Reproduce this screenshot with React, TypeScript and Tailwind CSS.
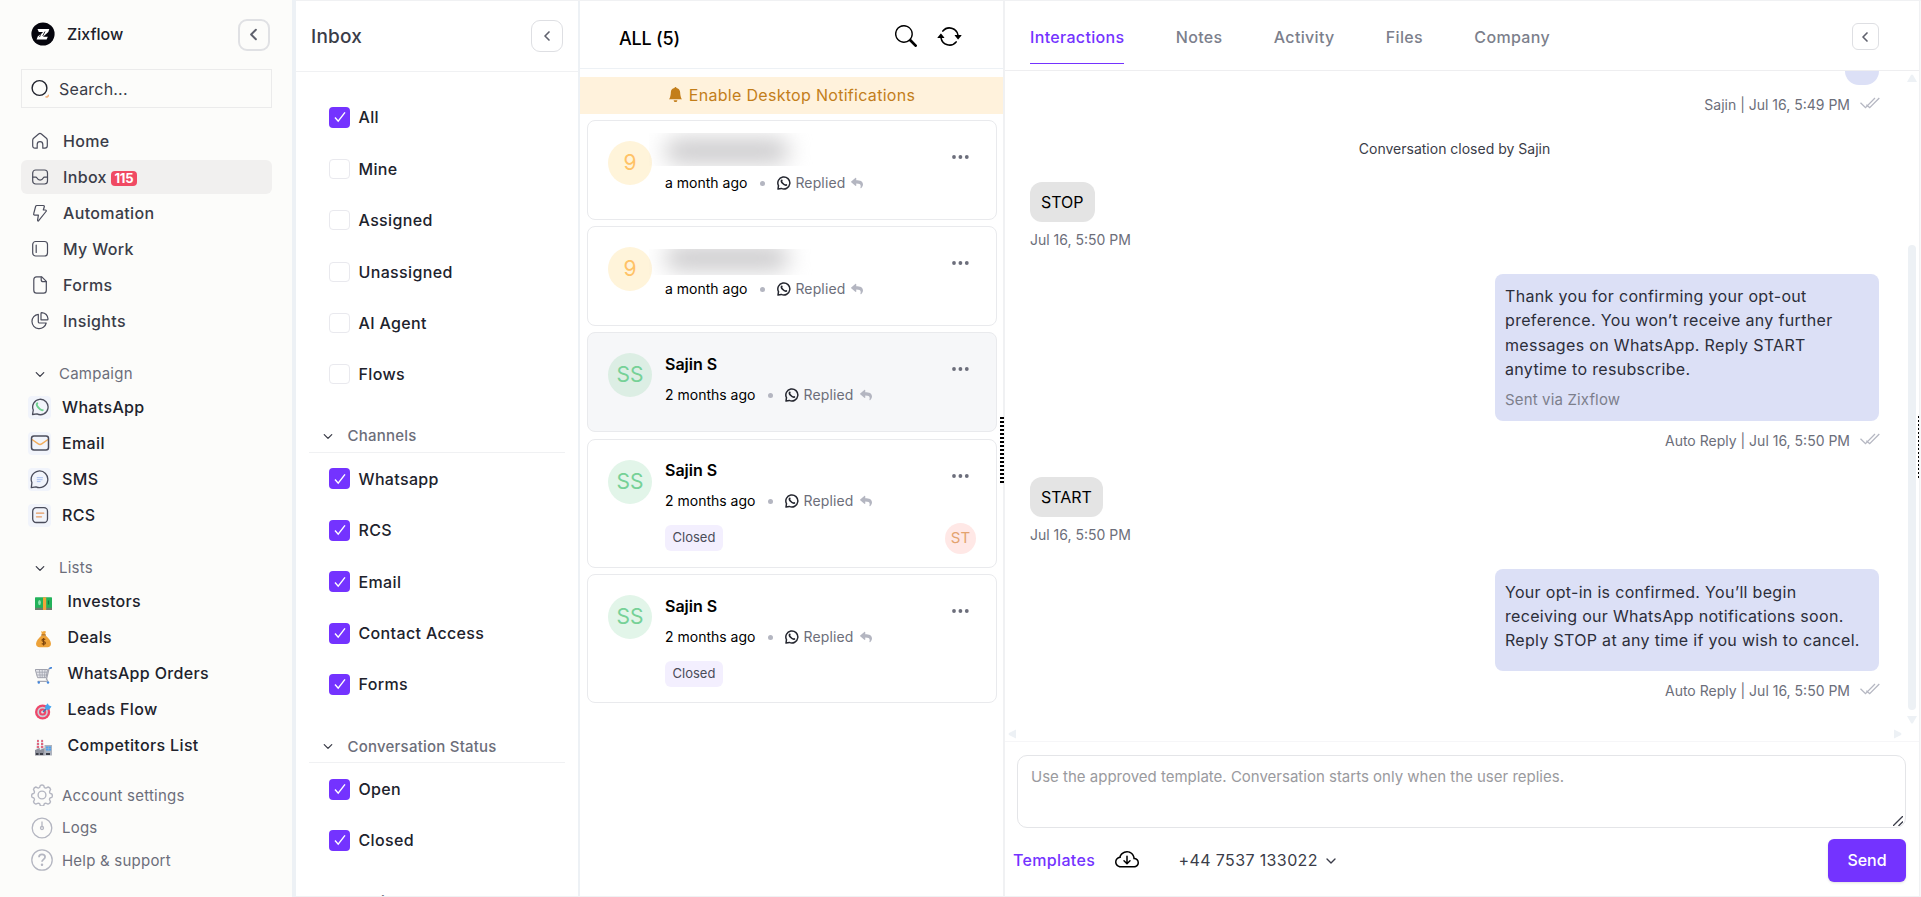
import React from 'react';
import { BsArrowRepeat, BsBellFill, BsCloudArrowDown, BsSearch } from 'react-icons/bs';
import { FaReply } from 'react-icons/fa';
import { ChevronDown, ChevronLeft } from 'lucide-react';

const stroke = {
  fill: 'none',
  stroke: '#4b4d5c',
  strokeWidth: 1.2,
  strokeLinecap: 'round' as const,
  strokeLinejoin: 'round' as const,
};

const HomeIcon = () => (
  <svg width="18" height="18" viewBox="0 0 18 18" {...stroke}>
    <path d="M1.7 8.2c0-.8.3-1.4.9-1.9l5-4.3c.8-.7 2-.7 2.8 0l5 4.3c.6.5.9 1.100.9 1.900v5.600c0 1.500-.9 2.400-2.300 2.400h-2.200v-3.700a2.800 2.800 0 0 0-5.600 0v3.700H4c-1.400 0-2.300-.9-2.300-2.400z" />
  </svg>
);

const InboxIcon = () => (
  <svg width="18" height="18" viewBox="0 0 18 18" {...stroke}>
    <rect x="1.700" y="2" width="14.800" height="14" rx="3" />
    <path d="M1.700 9.200h3c.6 0 1 .3 1.300.8.600 1.300 1.700 2.100 3.100 2.100s2.500-.8 3.100-2.100c.3-.5.700-.8 1.300-.8h3" />
  </svg>
);

const AutomationIcon = () => (
  <svg width="18" height="18" viewBox="0 0 18 18" {...stroke}>
    <path d="M5.800 1.500h6.500c.8 0 1.200.6 1 1.300l-1 3.200h2c1 0 1.300.8.7 1.500l-7.300 9.200c-.5.600-1.200.3-1.100-.5l.8-5.100H3.700c-.8 0-1.300-.6-1-1.400L4.600 2.500c.2-.6.600-1 1.200-1z" />
  </svg>
);

const MyWorkIcon = () => (
  <svg width="18" height="18" viewBox="0 0 18 18" {...stroke}>
    <rect x="1.700" y="1.500" width="14.800" height="14.500" rx="3" />
    <path d="M5.200 5v7.500" />
  </svg>
);

const FormsIcon = () => (
  <svg width="18" height="18" viewBox="0 0 18 18" {...stroke}>
    <path d="M5.500.8h5.300l4.500 4.500v9c0 1.700-1 2.900-2.700 2.900H5.500c-1.700 0-2.700-1.200-2.700-2.900V3.700C2.800 2 3.800.8 5.500.8z" />
    <path d="M10.200 1v2.700c0 1.200.7 2 2 2h3" />
  </svg>
);

const InsightsIcon = () => (
  <svg width="18" height="18" viewBox="0 0 18 18" {...stroke}>
    <path d="M7.300 2.300A7.200 7.200 0 1 0 15.200 11H8.500c-.7 0-1.200-.5-1.200-1.200z" />
    <path d="M10 1.400c0-.5.400-.8.800-.8a7 7 0 0 1 6.200 6.300c0 .5-.3.900-.8.900H10z" />
  </svg>
);

const WhatsAppColorIcon = () => (
  <svg width="18" height="18" viewBox="0 0 18 18" {...stroke} strokeWidth={1.3}>
    <path d="M1.500 16.500l.8-4.500A7.700 7.700 0 1 1 6 15.900z" />
    <path d="M6.300 5.300c-.9.700-.6 2.200.7 3.900s3.300 3.300 4.800 2.900" stroke="#6fd08f" strokeWidth="1.900" />
  </svg>
);

const EmailIcon = () => (
  <svg width="20" height="18" viewBox="0 0 20 18" {...stroke} strokeWidth={1.500}>
    <path d="M2 5.500l6.300 4.300c1 .7 2.400.7 3.400 0L18 5.500" stroke="#f2ad5c" />
    <rect x="1.500" y="2" width="17" height="14" rx="2.500" />
  </svg>
);

const SmsIcon = () => (
  <svg width="19" height="19" viewBox="0 0 19 19" {...stroke} strokeWidth={1.300}>
    <path d="M1.300 17.600l.6-5A8.300 8.300 0 1 1 6 16.800z" />
    <path d="M7.200 7.700h5.300M7.200 9.700h5M7.200 11.600h3" stroke="#a9c0f0" strokeWidth="1" />
  </svg>
);

const RcsIcon = () => (
  <svg width="18" height="18" viewBox="0 0 18 18" {...stroke} strokeWidth={1.300}>
    <rect x="1.700" y="1.700" width="14.800" height="14.800" rx="3.500" />
    <path d="M5.500 7.200h7.200M5.500 10.800h5" stroke="#e59a62" />
  </svg>
);

const MoneyEmoji = () => (
  <svg width="17" height="17" viewBox="0 0 17 17">
    <rect x="0" y="12" width="17" height="3" fill="#6c7a6c" />
    <rect x="0" y="2.300" width="17" height="10.500" rx=".6" fill="#22b25a" />
    <rect x="8" y="2.300" width="3.200" height="12.700" fill="#f2a53a" />
    <ellipse cx="4.500" cy="7.600" rx="1.400" ry="2.600" fill="#8fe0ae" />
    <path d="M13.500 5.500v4" stroke="#13753a" strokeWidth="1.200" />
  </svg>
);

const MoneyBagEmoji = () => (
  <svg width="17" height="17" viewBox="0 0 17 17">
    <path d="M6.200 0l1.300.8L9 0l2 .6-1.200 3.400H7z" fill="#f0a63a" />
    <path d="M6.500 4.500h4.200C13.500 7 16 10 16 12.800c0 2.300-1.500 3.400-3.500 3.400h-8C2.500 16.200 1 15.100 1 12.800 1 10 3.800 7 6.500 4.500z" fill="#eda239" />
    <path d="M6.300 4h4.600" stroke="#a86414" strokeWidth="1.200" />
    <path d="M10.300 8.500c-.9-.8-3.300-.7-3.300.8 0 1.700 3.400.9 3.400 2.600 0 1.500-2.500 1.600-3.600.6M8.600 7v7.600" fill="none" stroke="#7a430c" strokeWidth="1.100" />
  </svg>
);

const CartEmoji = () => (
  <svg width="17" height="17" viewBox="0 0 17 17" fill="none" strokeLinecap="round">
    <path d="M.6 2.500h12l-1.600 8.200H3z" fill="#e4e5ea" stroke="#a0a2ad" />
    <path d="M1.500 5.200h10.600M2 8h9.500M4.500 3l.7 7.500M7.200 3v7.500M10 3l-.6 7.500" stroke="#a0a2ad" strokeWidth=".8" />
    <path d="M16 .9l-2 .8-2.500 10.500c1.800 1.300 1.300 2.200-.5 2.200H3" stroke="#a6a8b3" strokeWidth="1.300" />
    <path d="M15 1.300l1.400-.6" stroke="#4386dc" strokeWidth="1.600" />
    <circle cx="3.800" cy="15.500" r="1.200" fill="#4386dc" />
    <circle cx="13" cy="15.500" r="1.200" fill="#4386dc" />
  </svg>
);

const TargetEmoji = () => (
  <svg width="17" height="17" viewBox="0 0 17 17">
    <circle cx="7.600" cy="9" r="7.600" fill="#ee4769" />
    <circle cx="7.600" cy="9" r="5.300" fill="#c9ced8" />
    <circle cx="7.600" cy="9" r="3.600" fill="#ee4769" />
    <circle cx="7.600" cy="9" r="1.500" fill="#dfe2e8" />
    <path d="M8 9l4.500-4.500" stroke="#3579b8" strokeWidth="1.300" />
    <path d="M10 3.300L12.800.2l.9 2 2.800 1.200-2.400 3.400-3.200-.3z" fill="#46a4ee" />
  </svg>
);

const FactoryEmoji = () => (
  <svg width="17" height="17" viewBox="0 0 17 17">
    <path d="M2 .5h1.800l.5 10H1.600zM6.200.5H8l.5 10H5.700z" fill="#d9d9df" />
    <path d="M2 2h1.900M1.900 5h2.200M1.800 8h2.300M6.200 2h1.900M6 5h2.200M5.900 8h2.400" stroke="#e4405f" strokeWidth="1.500" />
    <rect x="9.500" y="6" width="7.500" height="10.500" fill="#aeb3be" />
    <path d="M0 11l4.800-2v2l4.800-2v7.500H0z" fill="#8d909b" />
    <path d="M11 7.500h5v4h-5z" fill="#4fa3ef" />
    <path d="M13.500 7.500v4M11 9.500h5" stroke="#aeb3be" strokeWidth=".5" />
    <path d="M1 15h2.500M5 15h3M11 15h4" stroke="#3b3d46" strokeWidth="1.800" />
  </svg>
);

const GearIcon = () => (
  <svg width="22" height="22" viewBox="0 0 22 22" fill="none" stroke="#b4b6c1" strokeWidth="1.400" strokeLinejoin="round">
    <path d="M9.300 1.500q1.700-1.100 3.400 0l.6 1.900q1 .9 2.200.4l1.700-.8q1.900.5 2.400 2.400l-.9 1.900q-.4 1.200.5 2.100l1.600.6q1.100 1.600 0 3.300l-1.700.6q-.9.900-.4 2.100l.8 1.800q-.5 1.800-2.400 2.300l-1.800-.8q-1.200-.4-2 .5l-.6 1.700q-1.700 1.100-3.400 0l-.6-1.700q-.9-.9-2.100-.5l-1.800.8q-1.800-.5-2.300-2.300l.8-1.800q.4-1.200-.5-2.100l-1.600-.6q-1.100-1.700 0-3.300l1.700-.6q.8-.9.4-2.100l-.8-1.900q.5-1.900 2.300-2.400l1.900.8q1.200.5 2-.4z" />
    <circle cx="11" cy="11" r="3.900" />
  </svg>
);

const LogsIcon = () => (
  <svg width="22" height="22" viewBox="0 0 22 22" fill="none" stroke="#b4b6c1" strokeWidth="1.300">
    <circle cx="11" cy="11" r="9.800" />
    <circle cx="11" cy="11" r="1.500" />
    <path d="M11 4.500v5" />
  </svg>
);

const HelpIcon = () => (
  <svg width="22" height="22" viewBox="0 0 22 22" fill="none" stroke="#b4b6c1" strokeWidth="1.300">
    <circle cx="11" cy="11" r="10.200" />
    <path d="M8 8.300c0-1.800 1.200-2.900 3-2.900s3.100 1.100 3.100 2.700c0 2.300-3.100 2.300-3.100 4.700" strokeWidth="1.700" />
    <circle cx="11" cy="15.800" r=".6" fill="#b4b6c1" />
  </svg>
);

const WhatsAppIcon = () => (
  <svg width="14" height="14" viewBox="0 0 14 14" fill="none" stroke="#24262f" strokeLinejoin="round">
    <path d="M1 13l.5-3.300A6 6 0 1 1 4.300 12.400z" strokeWidth="1.500" />
    <path d="M4.800 4.300c-.6.600-.3 1.800.8 3s2.500 2.200 3.800 1.700" strokeWidth="1.700" strokeLinecap="round" />
  </svg>
);

const DoubleTick = () => (
  <svg width="20" height="12" viewBox="0 0 20 12" fill="none" stroke="#b5b7c2" strokeWidth="1.300">
    <path d="M.5 5.700l5 5L15 1M6.300 7.700l3.400 3L19.300 1" />
  </svg>
);

const MoreDots = () => (
  <svg width="18" height="4" viewBox="0 0 18 4" fill="#6c6e7b">
    <circle cx="2" cy="2" r="1.900" />
    <circle cx="8.400" cy="2" r="1.900" />
    <circle cx="14.800" cy="2" r="1.900" />
  </svg>
);

const Logo = () => (
  <svg width="24" height="24" viewBox="0 0 24 24">
    <circle cx="12" cy="12" r="11.600" fill="#05050d" />
    <path d="M6.500 7h11.800l-1 3-5.300 4.700h4.800l-1.200 2.900H5.600l1.100-3L12.200 9.900H7.800z" fill="#fff" />
    <path d="M10.500 10.500l-2 4.500M14 9.500l-2.300 4.500" stroke="#05050d" strokeWidth=".8" />
  </svg>
);

const navItems = [
  { label: 'Home', icon: <HomeIcon /> },
  { label: 'Inbox', icon: <InboxIcon />, count: 115 },
  { label: 'Automation', icon: <AutomationIcon /> },
  { label: 'My Work', icon: <MyWorkIcon /> },
  { label: 'Forms', icon: <FormsIcon /> },
  { label: 'Insights', icon: <InsightsIcon /> },
];

const campaignItems = [
  { label: 'WhatsApp', icon: <WhatsAppColorIcon /> },
  { label: 'Email', icon: <EmailIcon /> },
  { label: 'SMS', icon: <SmsIcon /> },
  { label: 'RCS', icon: <RcsIcon /> },
];

const listItems = [
  { label: 'Investors', icon: <MoneyEmoji /> },
  { label: 'Deals', icon: <MoneyBagEmoji /> },
  { label: 'WhatsApp Orders', icon: <CartEmoji /> },
  { label: 'Leads Flow', icon: <TargetEmoji /> },
  { label: 'Competitors List', icon: <FactoryEmoji /> },
];

const footerItems = [
  { label: 'Account settings', icon: <GearIcon /> },
  { label: 'Logs', icon: <LogsIcon /> },
  { label: 'Help & support', icon: <HelpIcon /> },
];

const filterGroups = [
  {
    title: 'Channels',
    items: ['Whatsapp', 'RCS', 'Email', 'Contact Access', 'Forms'],
  },
  {
    title: 'Conversation Status',
    items: ['Open', 'Closed'],
  },
];

interface Conversation {
  initials: string;
  name?: string;
  tightMask?: boolean;
  time: string;
  closed?: boolean;
  assignee?: string;
  active?: boolean;
}

// Contacts without a name have their number masked
const conversations: Conversation[] = [
  { initials: '9', time: 'a month ago' },
  { initials: '9', tightMask: true, time: 'a month ago' },
  { initials: 'SS', name: 'Sajin S', time: '2 months ago', active: true },
  { initials: 'SS', name: 'Sajin S', time: '2 months ago', closed: true, assignee: 'ST' },
  { initials: 'SS', name: 'Sajin S', time: '2 months ago', closed: true },
];

const Sidebar: React.FC = () => (
  <aside className="w-[296px] shrink-0 border-r-4 border-[#edf1f5] bg-[#fcfcfa] text-base text-[#3a3c48]">
    <div className="flex h-[69px] items-center pb-0.5 pl-[31px] pr-[22px]">
      <Logo />
      <span className="ml-3 font-medium text-[#20222c]">Zixflow</span>
      <button className="ml-auto mt-0.5 flex h-8 w-8 items-center justify-center rounded-[9px] border-2 border-[#e0e1e4] pr-0.5">
        <ChevronLeft className="h-[19px] w-[19px] text-[#5f616d]" strokeWidth={2.5} />
      </button>
    </div>

    <div className="ml-[21px] flex h-[39px] w-[251px] items-center border border-[#ebebeb] pl-[9px]">
      <svg width="20" height="20" viewBox="0 0 20 20" fill="none">
        <circle cx="8.500" cy="9" r="7.400" stroke="#20222c" strokeWidth="1.400" />
        <path d="M14.500 17.500c1 1 3.300.2 2.800-1.800" stroke="#f3b07a" strokeWidth="1.500" />
      </svg>
      <span className="ml-2 tracking-[0.2px]">Search...</span>
    </div>

    <nav className="ml-[21px] mt-4 flex w-[251px] flex-col gap-0.5 pb-px">
      {navItems.map((item) => (
        <div
          key={item.label}
          className={`flex h-[34px] items-center rounded-md pl-[9.500px] font-medium tracking-[0.35px] ${
            item.count ? 'bg-[#f1f0ef]' : ''
          }`}
        >
          {item.icon}
          <span className="ml-[14.500px]">{item.label}</span>
          {item.count && (
            <span className="ml-1 mt-[3px] flex h-[15px] w-[26px] items-center justify-center rounded bg-[#f04a63] text-[13px] font-bold tracking-tight text-white">
              {item.count}
            </span>
          )}
        </div>
      ))}
    </nav>

    <SidebarHeading label="Campaign" />
    {campaignItems.map((item) => (
      <div key={item.label} className="flex h-9 items-center pl-7 font-medium tracking-[0.35px] text-[#20222c]">
        <span className="flex h-[23px] w-[23px] items-center justify-center rounded bg-[#f1f4fb]">{item.icon}</span>
        <span className="ml-[11px]">{item.label}</span>
      </div>
    ))}

    <SidebarHeading label="Lists" />
    {listItems.map((item) => (
      <div key={item.label} className="flex h-9 items-center pl-[35px] font-medium tracking-[0.35px] text-[#20222c]">
        <span className="mt-1">{item.icon}</span>
        <span className="ml-[15.500px]">{item.label}</span>
      </div>
    ))}

    <div className="mt-4 text-[15px] tracking-[0.22px] text-[#6c6e7a]">
      {footerItems.map((item) => (
        <div key={item.label} className="flex h-[32.500px] items-center pl-[30.500px]">
          {item.icon}
          <span className="ml-[9.500px] pt-px">{item.label}</span>
        </div>
      ))}
    </div>
  </aside>
);

const SidebarHeading = ({ label }: { label: string }) => (
  <div className="mb-[3px] mt-[23px] flex h-6 items-center pl-8 text-[15px] tracking-[0.22px] text-[#6c6e7a]">
    <ChevronDown className="h-[15px] w-4 text-[#3a3c48]" strokeWidth={2} />
    <span className="ml-[11px]">{label}</span>
  </div>
);

const Checkbox = ({ label, checked }: { label: string; checked?: boolean }) => (
  <div className="flex h-[51.400px] items-center pl-[33px]">
    {checked ? (
      <span className="flex h-[21px] w-[21px] items-center justify-center rounded bg-[#7433ff]">
        <svg width="12" height="12" viewBox="0 0 12 12" fill="none" stroke="#fff" strokeWidth="1.400">
          <path d="M1 6.500l3.200 3.700L11 1.300" />
        </svg>
      </span>
    ) : (
      <span className="h-[20px] w-[21px] rounded border border-[#e9e9ee]" />
    )}
    <span className="ml-[8.500px] font-medium tracking-[0.35px]">{label}</span>
  </div>
);

const FilterHeading = ({ label }: { label: string }) => (
  <div className="mx-[13px] mt-[18px] flex h-[35.200px] items-center border-b border-[#f0f1f3] pl-[11px] pt-[3px] text-[15px] text-[#6c6e7a]">
    <ChevronDown className="h-[15px] w-4 text-[#3a3c48]" strokeWidth={2} />
    <span className="ml-[11.500px] font-medium tracking-[0.22px]">{label}</span>
  </div>
);

const FilterPanel: React.FC = () => (
  <section className="flex w-[284px] shrink-0 flex-col border-r-2 border-[#edf1f5] text-[#20222c]">
    <div className="flex h-[71px] shrink-0 items-center border-b border-[#f0f1f3] pl-[15px] pr-[15px]">
      <h2 className="mt-0.5 text-[19px] font-medium tracking-[0.2px] text-[#3a3c48]">Inbox</h2>
      <button className="ml-auto flex h-8 w-8 items-center justify-center rounded-[9px] border border-[#dedfe3]">
        <ChevronLeft className="h-4 w-4 text-[#5f616d]" strokeWidth={2.500} />
      </button>
    </div>
    <div className="pt-[19.700px]">
      <Checkbox label="All" checked />
      {['Mine', 'Assigned', 'Unassigned', 'AI Agent', 'Flows'].map((label) => (
        <Checkbox key={label} label={label} />
      ))}
      {filterGroups.map((group) => (
        <React.Fragment key={group.title}>
          <FilterHeading label={group.title} />
          {group.items.map((label) => (
            <Checkbox key={label} label={label} checked />
          ))}
        </React.Fragment>
      ))}
      <FilterHeading label="Providers" />
    </div>
  </section>
);

const MaskedName = ({ tight }: { tight?: boolean }) => (
  <span className={`-ml-4 flex w-[164px] overflow-hidden ${tight ? '-mb-[5px] mt-[22px] h-[26px]' : '-mb-0.5 mt-3 h-[33px]'}`}>
    <span className={`ml-4 h-6 w-[124px] rounded-full bg-[#c9c8ca] blur-[11px] ${tight ? '-mt-[3px]' : 'mt-1.5'}`} />
  </span>
);

const ConversationCard = ({ item }: { item: Conversation }) => (
  <div
    className={`flex rounded-lg border border-[#e9eaed] pl-5 pr-5 ${
      item.active ? 'mb-px bg-[#f6f7f9]' : ''
    } ${item.closed ? 'h-[129px]' : 'h-[100px]'}`}
  >
    <span
      className={`mt-5 flex h-11 w-11 shrink-0 items-center justify-center rounded-full text-[21px] ${
        item.initials === '9' ? 'bg-[#fff4da] text-[#ffc266]' : item.active ? 'bg-[#dceee4] text-[#76d197]' : 'bg-[#e2f5e9] text-[#76d197]'
      }`}
    >
      {item.initials}
    </span>
    <div className="ml-[13px] flex flex-col items-start">
      {item.name ? (
        <span className={`text-base font-semibold leading-6 text-black ${item.assignee ? 'mt-[18px]' : 'mt-[19px]'}`}>
          {item.name}
        </span>
      ) : (
        <MaskedName tight={item.tightMask} />
      )}
      <div className="mt-2 flex h-[21px] items-center text-sm text-black">
        <span>{item.time}</span>
        <span className="ml-[13px] mt-px h-[5px] w-[5px] rounded-full bg-[#b4b6c1]" />
        <span className="ml-3 mr-1 mt-px">
          <WhatsAppIcon />
        </span>
        <span className="mt-px tracking-[0.15px] text-[#6c6e7a]">Replied</span>
        <FaReply className="ml-1.5 h-[12px] w-[12px] text-[#b4b6c1]" />
      </div>
      {item.closed && (
        <span className="mt-3.5 flex h-[26px] items-center rounded-md bg-[#f3effe] px-[7.500px] text-[13px] text-[#4a4c58]">
          Closed
        </span>
      )}
    </div>
    <div className="ml-auto flex w-[31px] flex-col items-center pt-[34px]">
      <MoreDots />
      {item.assignee && (
        <span className="mt-[45px] flex h-[31px] w-[31px] items-center justify-center rounded-full bg-[#ffe8e6] text-[15px] text-[#e3a36f]">
          {item.assignee}
        </span>
      )}
    </div>
  </div>
);

const ConversationList: React.FC = () => (
  <section className="relative w-[425px] shrink-0 border-r-2 border-[#f0f1f3]">
    <div className="flex h-[68px] items-center border-b border-[#edf1f5] pl-[39px] pr-[41px] text-black">
      <h2 className="mt-2 text-lg font-medium tracking-[-0.2px]">ALL (5)</h2>
      <BsSearch className="ml-auto mt-0.5 h-[22px] w-[22px]" />
      <BsArrowRepeat className="ml-5 mt-1 h-[25px] w-[25px]" />
    </div>
    <div className="mt-2 flex h-[37px] items-center justify-center bg-[#fff2dc] pb-0.5 text-base tracking-[0.3px] text-[#c37e1a]">
      <BsBellFill className="mr-1.5 h-[15px] w-[15px]" />
      Enable Desktop Notifications
    </div>
    <div className="mt-1.5 flex flex-col gap-1.5 pl-[7px] pr-1.5">
      {conversations.map((item, index) => (
        <ConversationCard key={index} item={item} />
      ))}
    </div>
    <div className="absolute -right-px top-[416px] h-[66px] w-1 bg-[repeating-linear-gradient(to_bottom,#000_0_2px,#fff_2px_4px)]" />
  </section>
);

const MessageMeta = ({ author, time }: { author: string; time: string }) => (
  <div className="flex h-5 items-center justify-end text-sm text-[#6c6e7a]">
    {author} | {time}
    <span className="-mr-px mb-1 ml-2.5">
      <DoubleTick />
    </span>
  </div>
);

const Incoming = ({ text }: { text: string }) => (
  <div>
    <span className="inline-flex h-10 items-center rounded-xl bg-[#e4e4e4] px-[11px] text-base text-black">{text}</span>
    <p className="mt-2 text-sm text-[#6c6e7a]">Jul 16, 5:50 PM</p>
  </div>
);

const tabs = ['Interactions', 'Notes', 'Activity', 'Files', 'Company'];

const ChatPanel: React.FC = () => (
  <section className="relative flex w-[914px] flex-col">
    <div className="flex h-[70px] shrink-0 items-end border-b border-[#eeeef0] pb-1.5 pl-[25px] pr-10 text-base font-medium text-[#7c7f8c]">
      <div className="flex gap-[51.300px]">
        {tabs.map((tab, index) => (
          <span
            key={tab}
            className={`flex h-[53px] items-center border-b tracking-[0.33px] ${
              index === 0 ? 'border-[#7433ff] text-[#7433ff]' : 'border-transparent'
            }`}
          >
            {tab}
          </span>
        ))}
      </div>
      <button className="mb-3.5 ml-auto flex h-[27px] w-[27px] items-center justify-center rounded-md border-[1.500px] border-[#dedfe3] pr-px">
        <ChevronLeft className="h-4 w-4 text-[#5f616d]" strokeWidth={2.500} />
      </button>
    </div>

    <div className="flex h-[671px] shrink-0 border-b border-[#f6f6f8]">
      <div className="flex w-[874px] shrink-0 flex-col">
        <div className="ml-[25px] flex flex-col">
          <div className="h-3.5 w-[34px] self-end rounded-b-[14px] bg-[#dce0f6]" />
          <div className="mt-2.5">
            <MessageMeta author="Sajin" time="Jul 16, 5:49 PM" />
          </div>
          <p className="mt-6 text-center text-sm text-[#3a3c48]">Conversation closed by Sajin</p>
          <div className="mt-[23px]">
            <Incoming text="STOP" />
          </div>
          <div className="mt-6 h-[147px] w-[384px] self-end rounded-lg bg-[#dce0f6] px-2.5 pt-2.5 text-base leading-[24.300px] tracking-[0.33px] text-[#2c2e3a]">
            Thank you for confirming your opt-out
            <br />
            preference. You won’t receive any further
            <br />
            messages on WhatsApp. Reply START
            <br />
            anytime to resubscribe.
            <p className="mt-[7px] text-[15px] tracking-[0.15px] text-[#7c7f8c]">Sent via Zixflow</p>
          </div>
          <div className="mt-2.5">
            <MessageMeta author="Auto Reply" time="Jul 16, 5:50 PM" />
          </div>
          <div className="mt-[26px]">
            <Incoming text="START" />
          </div>
          <div className="mt-6 h-[102px] w-[384px] self-end rounded-lg bg-[#dce0f6] px-2.5 pt-[11px] text-base leading-6 tracking-[0.31px] text-[#2c2e3a]">
            Your opt-in is confirmed. You’ll begin
            <br />
            receiving our WhatsApp notifications soon.
            <br />
            Reply STOP at any time if you wish to cancel.
          </div>
          <div className="mt-2.5">
            <MessageMeta author="Auto Reply" time="Jul 16, 5:50 PM" />
          </div>
        </div>
        <div className="-mr-[23px] mb-0.5 mt-auto flex items-center justify-between pl-[3px]">
          <svg width="8" height="10" viewBox="0 0 8 10" fill="#edf1f5"><path d="M8 .5v9L1 6q-1-1 0-2z" /></svg>
          <svg width="8" height="10" viewBox="0 0 8 10" fill="#edf1f5"><path d="M0 .5v9L7 6q1-1 0-2z" /></svg>
        </div>
      </div>
      <div className="ml-[27px] flex w-[11px] flex-col items-center pt-[3px]">
        <svg width="10" height="8" viewBox="0 0 10 8" fill="#edf1f5"><path d="M0 8h10L6 1Q5 0 4 1z" /></svg>
        <div className="mt-[163px] h-[465px] w-2 rounded-full bg-[#edf1f5]" />
        <svg className="mt-1.5" width="10" height="8" viewBox="0 0 10 8" fill="#edf1f5"><path d="M0 0h10L6 7Q5 8 4 7z" /></svg>
      </div>
    </div>

    <div className="ml-3 mt-[13px] flex h-[73px] w-[889px] shrink-0 justify-between rounded-[10px] border border-[#e4e5e8] pl-[13px] pr-0.5 pt-2.5 text-[15px] text-[#9a9a9e]">
      Use the approved template. Conversation starts only when the user replies.
      <svg className="mb-px self-end" width="10" height="10" viewBox="0 0 10 10" stroke="#3a3c48" strokeWidth="1.300">
        <path d="M0 10L10 0M5.500 10L10 5.500" />
      </svg>
    </div>

    <div className="mt-2.5 flex h-11 items-center pl-2 pr-[13px] text-base">
      <span className="font-medium tracking-[0.33px] text-[#7433ff]">Templates</span>
      <BsCloudArrowDown className="ml-5 h-6 w-6 text-black" />
      <span className="ml-[39.500px] tracking-[0.37px] text-[#3a3c48]">+44 7537 133022</span>
      <ChevronDown className="ml-[5px] mt-px h-4 w-4 text-[#3a3c48]" strokeWidth={2} />
      <button className="ml-auto h-[43px] w-[78px] rounded-md bg-[#7433ff] font-medium text-white shadow-sm">Send</button>
    </div>
    <div className="absolute right-0 top-[415px] h-16 w-px bg-[repeating-linear-gradient(to_bottom,#000_0_2px,#fff_2px_4px)]" />
  </section>
);

const App: React.FC = () => {
  return (
    <div className="flex h-[897px] w-full overflow-hidden bg-white font-['Inter',sans-serif]">
      <Sidebar />
      <main className="flex h-[897px] flex-1 overflow-hidden border-y border-[#f0f1f3]">
        <FilterPanel />
        <ConversationList />
        <ChatPanel />
        <div className="flex-1 border-l border-[#f0f1f3] bg-[#f7f7f8]" />
      </main>
    </div>
  );
};

export default App;
